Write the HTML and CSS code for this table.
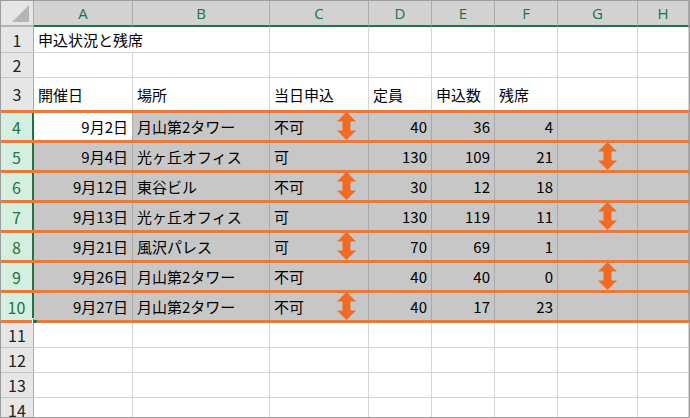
FILE: index.html
```html
<!DOCTYPE html>
<html lang="ja">
<head>
<meta charset="utf-8">
<title>申込状況と残席</title>
<link rel="stylesheet" href="styles.css">
</head>
<body>
<div class="sheet">
  <div class="row head">
    <div class="corner"></div>
    <div class="ch">A</div><div class="ch">B</div><div class="ch">C</div><div class="ch">D</div>
    <div class="ch">E</div><div class="ch">F</div><div class="ch">G</div><div class="ch">H</div>
  </div>
  <div class="row r1">
    <div class="rh">1</div>
    <div class="c span2">申込状況と残席</div><div class="c"></div><div class="c"></div><div class="c"></div><div class="c"></div><div class="c"></div><div class="c"></div>
  </div>
  <div class="row r2">
    <div class="rh">2</div>
    <div class="c"></div><div class="c"></div><div class="c"></div><div class="c"></div><div class="c"></div><div class="c"></div><div class="c"></div><div class="c"></div>
  </div>
  <div class="row r3">
    <div class="rh">3</div>
    <div class="c">開催日</div><div class="c">場所</div><div class="c">当日申込</div><div class="c">定員</div><div class="c">申込数</div><div class="c">残席</div><div class="c"></div><div class="c"></div>
  </div>

  <div class="row sel">
    <div class="rh">4</div>
    <div class="c num active">9月2日</div><div class="c">月山第2タワー</div><div class="c">不可<svg class="arrow arrow-c" viewBox="0 0 19 28"><polygon points="9.5,0 19,9.5 13.5,9.5 13.5,18.5 19,18.5 9.5,28 0,18.5 5.5,18.5 5.5,9.5 0,9.5"/></svg></div><div class="c num">40</div><div class="c num">36</div><div class="c num">4</div><div class="c"></div><div class="c"></div>
  </div>
  <div class="row sel">
    <div class="rh">5</div>
    <div class="c num">9月4日</div><div class="c">光ヶ丘オフィス</div><div class="c">可</div><div class="c num">130</div><div class="c num">109</div><div class="c num">21</div><div class="c"><svg class="arrow arrow-g" viewBox="0 0 19 28"><polygon points="9.5,0 19,9.5 13.5,9.5 13.5,18.5 19,18.5 9.5,28 0,18.5 5.5,18.5 5.5,9.5 0,9.5"/></svg></div><div class="c"></div>
  </div>
  <div class="row sel">
    <div class="rh">6</div>
    <div class="c num">9月12日</div><div class="c">東谷ビル</div><div class="c">不可<svg class="arrow arrow-c" viewBox="0 0 19 28"><polygon points="9.5,0 19,9.5 13.5,9.5 13.5,18.5 19,18.5 9.5,28 0,18.5 5.5,18.5 5.5,9.5 0,9.5"/></svg></div><div class="c num">30</div><div class="c num">12</div><div class="c num">18</div><div class="c"></div><div class="c"></div>
  </div>
  <div class="row sel">
    <div class="rh">7</div>
    <div class="c num">9月13日</div><div class="c">光ヶ丘オフィス</div><div class="c">可</div><div class="c num">130</div><div class="c num">119</div><div class="c num">11</div><div class="c"><svg class="arrow arrow-g" viewBox="0 0 19 28"><polygon points="9.5,0 19,9.5 13.5,9.5 13.5,18.5 19,18.5 9.5,28 0,18.5 5.5,18.5 5.5,9.5 0,9.5"/></svg></div><div class="c"></div>
  </div>
  <div class="row sel">
    <div class="rh">8</div>
    <div class="c num">9月21日</div><div class="c">風沢パレス</div><div class="c">可<svg class="arrow arrow-c" viewBox="0 0 19 28"><polygon points="9.5,0 19,9.5 13.5,9.5 13.5,18.5 19,18.5 9.5,28 0,18.5 5.5,18.5 5.5,9.5 0,9.5"/></svg></div><div class="c num">70</div><div class="c num">69</div><div class="c num">1</div><div class="c"></div><div class="c"></div>
  </div>
  <div class="row sel">
    <div class="rh">9</div>
    <div class="c num">9月26日</div><div class="c">月山第2タワー</div><div class="c">不可</div><div class="c num">40</div><div class="c num">40</div><div class="c num">0</div><div class="c"><svg class="arrow arrow-g" viewBox="0 0 19 28"><polygon points="9.5,0 19,9.5 13.5,9.5 13.5,18.5 19,18.5 9.5,28 0,18.5 5.5,18.5 5.5,9.5 0,9.5"/></svg></div><div class="c"></div>
  </div>
  <div class="row sel last">
    <div class="rh">10<span class="handle"></span></div>
    <div class="c num">9月27日</div><div class="c">月山第2タワー</div><div class="c">不可<svg class="arrow arrow-c" viewBox="0 0 19 28"><polygon points="9.5,0 19,9.5 13.5,9.5 13.5,18.5 19,18.5 9.5,28 0,18.5 5.5,18.5 5.5,9.5 0,9.5"/></svg></div><div class="c num">40</div><div class="c num">17</div><div class="c num">23</div><div class="c"></div><div class="c"></div>
  </div>

  <div class="row low">
    <div class="rh">11</div>
    <div class="c"></div><div class="c"></div><div class="c"></div><div class="c"></div><div class="c"></div><div class="c"></div><div class="c"></div><div class="c"></div>
  </div>
  <div class="row low">
    <div class="rh">12</div>
    <div class="c"></div><div class="c"></div><div class="c"></div><div class="c"></div><div class="c"></div><div class="c"></div><div class="c"></div><div class="c"></div>
  </div>
  <div class="row low">
    <div class="rh">13</div>
    <div class="c"></div><div class="c"></div><div class="c"></div><div class="c"></div><div class="c"></div><div class="c"></div><div class="c"></div><div class="c"></div>
  </div>
  <div class="row low">
    <div class="rh">14</div>
    <div class="c"></div><div class="c"></div><div class="c"></div><div class="c"></div><div class="c"></div><div class="c"></div><div class="c"></div><div class="c"></div>
  </div>
</div>
</body>
</html>
```

FILE: styles.css
```css
html, body {
  margin: 0;
  padding: 0;
  background: #ffffff;
}

.sheet {
  box-sizing: border-box;
  width: 690px;
  height: 418px;
  border: 1px solid #9c9c9c;
  overflow: hidden;
  font-family: "Noto Sans CJK JP", "Noto Sans", sans-serif;
  font-size: 15px;
  color: #000;
  background: #fff;
}

.row {
  box-sizing: border-box;
  display: grid;
  grid-template-columns: 33px 99px 137px 99px 63px 63px 63px 80px 1fr;
}

.row > div {
  box-sizing: border-box;
  display: flex;
  align-items: center;
  white-space: nowrap;
  min-width: 0;
}

/* column header row */
.head {
  height: 26px;
}
.corner {
  position: relative;
  background: #e6e6e6;
  border-right: 1px solid #ababab;
  border-bottom: 2px solid #b4b4b4;
}
.corner::after {
  content: "";
  position: absolute;
  right: 4px;
  bottom: 3px;
  width: 0;
  height: 0;
  border-left: 17px solid transparent;
  border-bottom: 17px solid #b5b5b5;
}
.ch {
  justify-content: center;
  background: #d2d2d2;
  color: #217346;
  border-right: 1px solid #ababab;
  border-bottom: 2px solid #217346;
  font-family: "Open Sans", "Noto Sans", sans-serif;
  font-size: 15px;
}

/* row headers */
.rh {
  position: relative;
  justify-content: center;
  background: #e6e6e6;
  color: #222;
  border-right: 1px solid #ababab;
  border-bottom: 1px solid #c6c6c6;
  font-size: 16px;
}

/* cells */
.c {
  position: relative;
  padding: 0 4px;
  border-right: 1px solid #d4d4d4;
  border-bottom: 1px solid #d4d4d4;
}
.span2 {
  grid-column: span 2;
}
.num {
  justify-content: flex-end;
}

.r1 { height: 26px; }
.r2 { height: 25px; }
.r3 { height: 32px; }
.r3 > div { border-bottom: none; }
.low { height: 25px; }

/* selected rows */
.sel {
  height: 30px;
  border-top: 3px solid #ea793c;
}
.sel.last {
  height: 33px;
  border-bottom: 3px solid #ea793c;
}
.sel > div { border-bottom: none; }
.sel .rh {
  background: #d4efdf;
  color: #217346;
  border-right: 2px solid #217346;
}
.sel .c {
  background: #c7c7c7;
  border-right-color: #a9a9a9;
}
.sel .c.active {
  background: #ffffff;
}

.handle {
  position: absolute;
  right: -5px;
  bottom: -3px;
  width: 4px;
  height: 4px;
  background: #217346;
  border-top: 1px solid #fff;
  border-left: 1px solid #fff;
}

/* arrows */
.arrow {
  position: absolute;
  top: -1px;
  width: 19px;
  height: 28px;
  fill: #f26b22;
}
.arrow-c { left: 67px; }
.arrow-g { left: 40px; }
```
